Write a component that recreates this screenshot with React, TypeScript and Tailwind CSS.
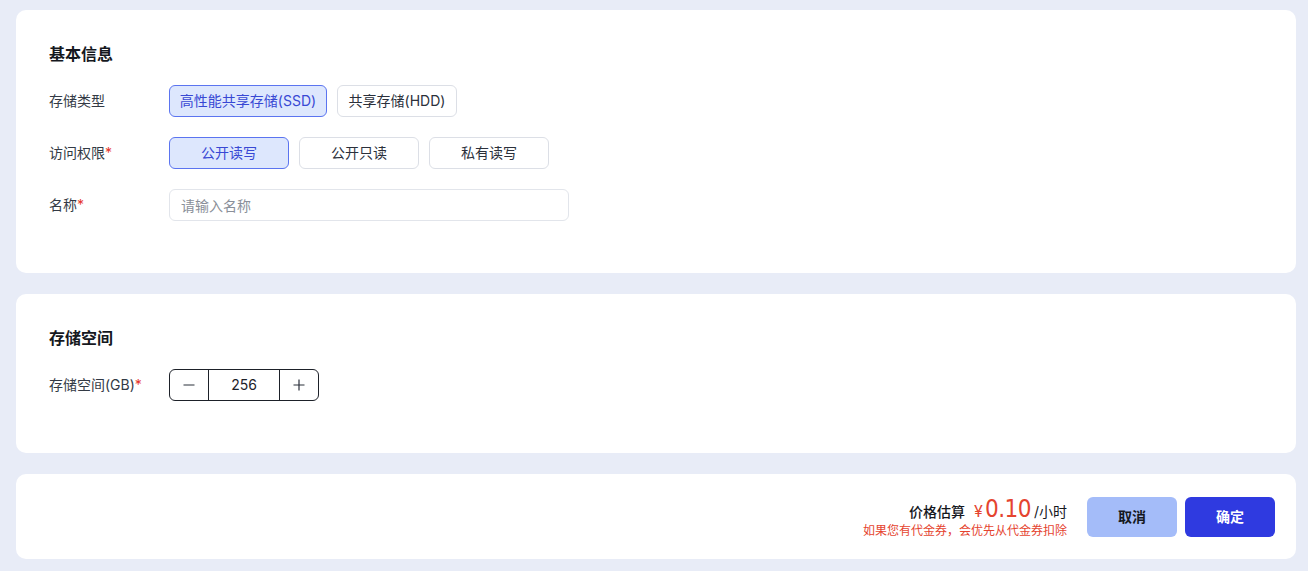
import { useState } from "react";

const font = { fontFamily: '"Inter", "Noto Sans CJK SC", sans-serif' };

function Label({ text, required }: { text: string; required?: boolean }) {
  return (
    <div className="w-[120px] shrink-0 text-sm text-[#333a45]">
      {text}
      {required && <span className="text-[#e5342a]">*</span>}
    </div>
  );
}

function Choice({ text, active, width, onClick }: { text: string; active: boolean; width: string; onClick: () => void }) {
  return (
    <button
      type="button"
      onClick={onClick}
      className={
        "h-8 rounded-md border text-sm " +
        width +
        (active ? " border-[#5b74f0] bg-[#dde7fd] text-[#3848d4]" : " border-[#dcdfe6] bg-white text-[#2b303b]")
      }
    >
      {text}
    </button>
  );
}

export default function App() {
  const [type, setType] = useState("ssd");
  const [access, setAccess] = useState("rw");
  const [name, setName] = useState("");
  const [size, setSize] = useState(256);

  return (
    <main className="flex min-h-screen flex-col gap-[21px] bg-[#e8ecf7] pl-4 pr-3 pt-[10px]" style={font}>
      <section className="rounded-[10px] bg-white px-[33px] pt-[33px] pb-[52px]">
        <h2 className="h-[22px] text-base font-semibold leading-[22px] text-[#15181e]">基本信息</h2>
        <div className="mt-5 flex flex-col gap-5">
          <div className="flex items-center">
            <Label text="存储类型" />
            <div className="flex gap-[10px]">
              <Choice text="高性能共享存储(SSD)" width="w-[158px]" active={type === "ssd"} onClick={() => setType("ssd")} />
              <Choice text="共享存储(HDD)" width="w-[120px]" active={type === "hdd"} onClick={() => setType("hdd")} />
            </div>
          </div>
          <div className="flex items-center">
            <Label text="访问权限" required />
            <div className="flex gap-[10px]">
              <Choice text="公开读写" width="w-[120px]" active={access === "rw"} onClick={() => setAccess("rw")} />
              <Choice text="公开只读" width="w-[120px]" active={access === "ro"} onClick={() => setAccess("ro")} />
              <Choice text="私有读写" width="w-[120px]" active={access === "private"} onClick={() => setAccess("private")} />
            </div>
          </div>
          <div className="flex items-center">
            <Label text="名称" required />
            <input
              value={name}
              onChange={(event) => setName(event.target.value)}
              placeholder="请输入名称"
              className="h-8 w-[400px] rounded-md border border-[#e2e5eb] px-[11px] text-sm text-[#2b303b] outline-none placeholder:text-[#8a8f99]"
            />
          </div>
        </div>
      </section>

      <section className="rounded-[10px] bg-white px-[33px] pt-[33px] pb-[52px]">
        <h2 className="h-[22px] text-base font-semibold leading-[22px] text-[#15181e]">存储空间</h2>
        <div className="mt-5 flex items-center">
          <Label text="存储空间(GB)" required />
          <div className="flex h-8 w-[150px] overflow-hidden rounded-md border border-[#1d2129]">
            <button type="button" onClick={() => setSize((s) => Math.max(1, s - 1))} className="flex w-10 items-center justify-center border-r border-[#1d2129] text-[#2b303b]">
              <svg width="12" height="12" viewBox="0 0 12 12"><path d="M0.5 6h11" stroke="currentColor" strokeWidth="1.2" /></svg>
            </button>
            <div className="flex w-[70px] items-center justify-center text-sm text-[#1d2129]">{size}</div>
            <button type="button" onClick={() => setSize((s) => s + 1)} className="flex w-10 items-center justify-center border-l border-[#1d2129] text-[#2b303b]">
              <svg width="12" height="12" viewBox="0 0 12 12"><path d="M0.5 6h11M6 0.5v11" stroke="currentColor" strokeWidth="1.2" /></svg>
            </button>
          </div>
        </div>
      </section>

      <section className="flex h-[85px] items-center justify-end gap-5 rounded-[10px] bg-white pr-[21px]">
        <div className="flex flex-col items-end">
          <div className="flex items-baseline">
            <span className="mr-[9px] text-sm font-medium text-[#15181e]">价格估算</span>
            <span className="text-base text-[#e5442f]">¥</span>
            <span className="ml-[2px] text-[24px] leading-7 text-[#e5442f] tracking-[-0.5px]" style={{ fontFamily: '"Liberation Sans Narrow", "DejaVu Sans Condensed", sans-serif' }}>0.10</span>
            <span className="ml-[3px] text-sm text-[#15181e]">/小时</span>
          </div>
          <div className="text-xs text-[#e5442f]">如果您有代金券，会优先从代金券扣除</div>
        </div>
        <div className="flex gap-2">
          <button type="button" className="h-10 w-[90px] rounded-md bg-[#a4bcf9] text-sm font-semibold text-[#15181e]">取消</button>
          <button type="button" className="h-10 w-[90px] rounded-md bg-[#2f3ae0] text-sm font-semibold text-white">确定</button>
        </div>
      </section>
    </main>
  );
}
